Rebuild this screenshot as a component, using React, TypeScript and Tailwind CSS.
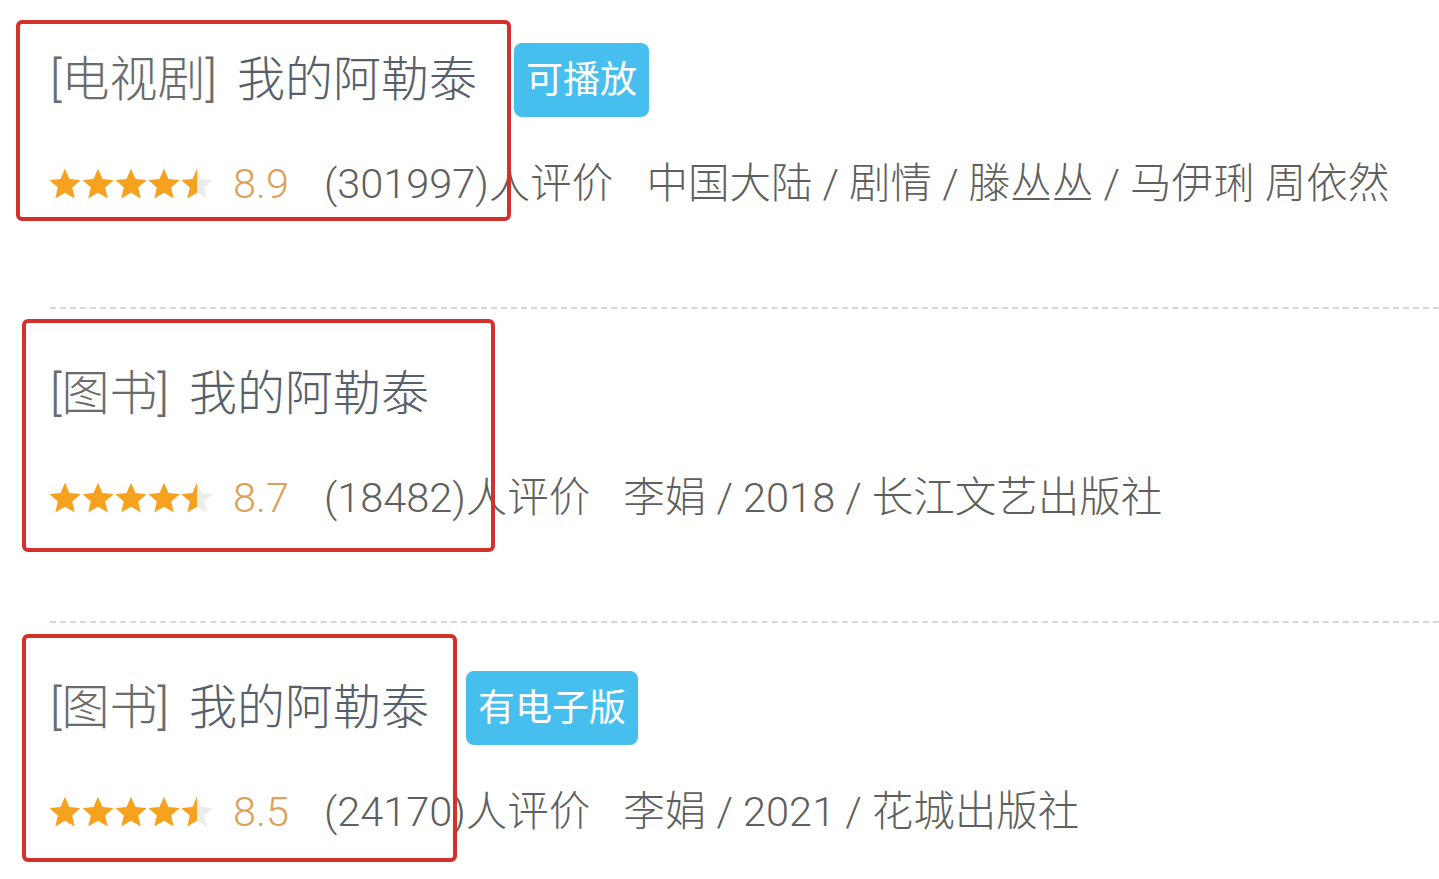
import React from "react";

type Item = {
  kind: string;
  title: string;
  badge?: string;
  rating: string;
  count: string;
  meta: string;
  box: { left: number; top: number; width: number; height: number };
};

const items: Item[] = [
  {
    kind: "[电视剧]",
    title: "我的阿勒泰",
    badge: "可播放",
    rating: "8.9",
    count: "(301997)人评价",
    meta: "中国大陆 / 剧情 / 滕丛丛 / 马伊琍 周依然",
    box: { left: -34, top: 20, width: 495, height: 201 },
  },
  {
    kind: "[图书]",
    title: "我的阿勒泰",
    rating: "8.7",
    count: "(18482)人评价",
    meta: "李娟 / 2018 / 长江文艺出版社",
    box: { left: -28, top: 10, width: 473, height: 233 },
  },
  {
    kind: "[图书]",
    title: "我的阿勒泰",
    badge: "有电子版",
    rating: "8.5",
    count: "(24170)人评价",
    meta: "李娟 / 2021 / 花城出版社",
    box: { left: -28, top: 11, width: 435, height: 228 },
  },
];

const STAR = "M12 1.8l3 6.9 7.4.7-5.6 4.9 1.7 7.3L12 17.8l-6.5 3.8 1.7-7.3-5.6-4.9 7.4-.7z";

function Stars() {
  return (
    <div className="flex items-center gap-[3px]">
      {[0, 1, 2, 3].map((i) => (
        <svg key={i} width="30" height="30" viewBox="2 2 20 20">
          <path d={STAR} fill="#f6a21e" />
        </svg>
      ))}
      <svg width="30" height="30" viewBox="2 2 20 20">
        <defs>
          <clipPath id="half">
            <rect x="0" y="0" width="12" height="24" />
          </clipPath>
        </defs>
        <path d={STAR} fill="#ececec" />
        <path d={STAR} fill="#f6a21e" clipPath="url(#half)" />
      </svg>
    </div>
  );
}

function Result({ item, first }: { item: Item; first: boolean }) {
  return (
    <div
      className={`relative border-b-2 border-dashed border-[#d6d6d6] pb-[98px] last:border-b-0 ${
        first ? "pt-[43px]" : "pt-[48px]"
      }`}
    >
      <div className="flex h-[74px] items-center">
        <span className="text-[48px] leading-none text-[#6b6b6b]">{item.kind}</span>
        <span className="ml-[20px] text-[48px] leading-none text-[#56606c]">{item.title}</span>
        {item.badge && (
          <span className="ml-[37px] flex h-[74px] items-center rounded-[8px] bg-[#47bfee] px-[12px] text-[37px] font-normal leading-none text-white">
            {item.badge}
          </span>
        )}
      </div>
      <div className="mt-[42px] flex h-[50px] items-center text-[41.5px] leading-none">
        <Stars />
        <span className="ml-[21px] text-[#dba257]">{item.rating}</span>
        <span className="ml-[35px] text-[#5f5f5f]">{item.count}</span>
        <span className="ml-[33px] text-[#5f5f5f]">{item.meta}</span>
      </div>
      <div
        className="pointer-events-none absolute rounded-[6px] border-[4px] border-[#d3312c]"
        style={{
          left: item.box.left,
          top: item.box.top,
          width: item.box.width,
          height: item.box.height,
        }}
      />
    </div>
  );
}

export default function App() {
  return (
    <div className="h-[879px] w-[1439px] overflow-hidden bg-white font-['Roboto','Noto_Sans_CJK_SC',sans-serif] font-light">
      <div className="ml-[50px]">
        {items.map((item, i) => (
          <Result key={i} item={item} first={i === 0} />
        ))}
      </div>
    </div>
  );
}
